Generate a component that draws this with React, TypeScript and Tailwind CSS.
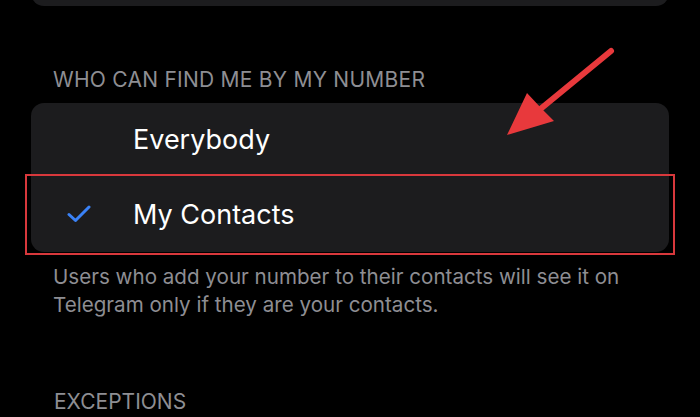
import React from 'react';

type Option = { id: string; label: string };

const options: Option[] = [
  { id: 'everybody', label: 'Everybody' },
  { id: 'contacts', label: 'My Contacts' },
];

const CheckMark = () => (
  <svg width="24" height="18" viewBox="0 0 24 18" fill="none">
    <path d="M2 9.5 L8.5 15.5 L22 2" stroke="#3a82f7" strokeWidth="3" strokeLinecap="round" strokeLinejoin="round" />
  </svg>
);

// red annotation arrow pointing down-left at the options card
const Arrow = () => (
  <svg className="absolute left-0 top-0 pointer-events-none" width="700" height="417" viewBox="0 0 700 417">
    <line x1="611" y1="51" x2="538" y2="111" stroke="#e8393c" strokeWidth="6" strokeLinecap="round" />
    <polygon points="507,135 527,93 541,108 554,121" fill="#e8393c" />
  </svg>
);

export default function App() {
  const selected = 'contacts';

  return (
    <div className="relative h-[417px] w-[700px] overflow-hidden bg-black font-['Inter','Liberation_Sans',sans-serif]">
      {/* tail of the previous section */}
      <div className="mx-[31px] -mt-[44px] h-[50px] rounded-[13px] bg-[#1c1c1e]" />

      <div className="mt-[62px] pl-[53px] text-[21px] leading-[24px] tracking-[0.25px] text-[#8e8e93]">
        WHO CAN FIND ME BY MY NUMBER
      </div>

      <div className="mx-[31px] mt-[11px] overflow-hidden rounded-[13px] bg-[#1c1c1e]">
        {options.map((opt, i) => (
          <div key={opt.id} className={`flex items-center ${i === 0 ? 'h-[73px]' : 'h-[76px]'}`}>
            <div className="flex w-[102px] items-center pl-[36px]">
              {selected === opt.id && <CheckMark />}
            </div>
            <span className="text-[27px] leading-none text-white">{opt.label}</span>
          </div>
        ))}
      </div>

      <p className="mt-[11px] w-[665px] pl-[53px] text-[20.6px] leading-[28px] text-[#8e8e93]">
        Users who add your number to their contacts will see it on Telegram only if they are your contacts.
      </p>

      <div className="mt-[71px] pl-[54px] text-[21px] leading-[24px] text-[#8e8e93]">EXCEPTIONS</div>

      {/* highlight box around the selected row */}
      <div className="absolute left-[25px] top-[174px] h-[81px] w-[650px] border-[2.5px] border-[#d8383c]" />
      <Arrow />
    </div>
  );
}
